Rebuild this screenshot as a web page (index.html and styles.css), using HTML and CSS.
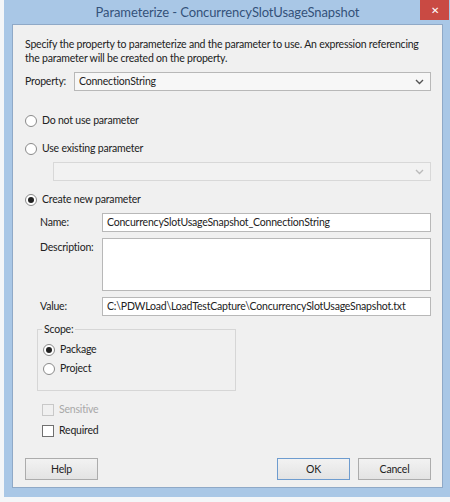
FILE: index.html
```html
<!DOCTYPE html>
<html lang="en">
  <head>
    <meta charset="UTF-8" />
    <title>Parameterize - ConcurrencySlotUsageSnapshot</title>
    <link rel="stylesheet" href="styles.css">
  </head>
  <body>
    <div class="window">
      <div class="titlebar">
        <span class="title">Parameterize - ConcurrencySlotUsageSnapshot</span>
        <button class="close">&#x2715;</button>
      </div>
      <div class="client">
        <p class="intro">
          Specify the property to parameterize and the parameter to use. An expression referencing<br>
          the parameter will be created on the property.
        </p>

        <div class="row property-row">
          <label class="prop-label">Property:</label>
          <div class="combo">
            <span>ConnectionString</span>
            <svg class="chev" width="9" height="6" viewBox="0 0 9 6"><path d="M1 1 L4.5 4.5 L8 1" fill="none" stroke="#555" stroke-width="1.4"/></svg>
          </div>
        </div>

        <div class="radio-line first">
          <span class="radio"></span>
          <span>Do not use parameter</span>
        </div>

        <div class="radio-line existing-line">
          <span class="radio"></span>
          <span>Use existing parameter</span>
        </div>
        <div class="combo disabled existing">
          <span></span>
          <svg class="chev" width="9" height="6" viewBox="0 0 9 6"><path d="M1 1 L4.5 4.5 L8 1" fill="none" stroke="#bbb" stroke-width="1.4"/></svg>
        </div>

        <div class="radio-line create">
          <span class="radio checked"></span>
          <span>Create new parameter</span>
        </div>

        <div class="fields">
          <div class="field">
            <label>Name:</label>
            <div class="textbox">ConcurrencySlotUsageSnapshot_ConnectionString</div>
          </div>
          <div class="field">
            <label>Description:</label>
            <div class="textbox multi"></div>
          </div>
          <div class="field">
            <label>Value:</label>
            <div class="textbox">C:\PDWLoad\LoadTestCapture\ConcurrencySlotUsageSnapshot.txt</div>
          </div>

          <fieldset class="scope">
            <legend>Scope:</legend>
            <div class="radio-line package">
              <span class="radio checked"></span>
              <span>Package</span>
            </div>
            <div class="radio-line project">
              <span class="radio"></span>
              <span>Project</span>
            </div>
          </fieldset>

          <div class="check-line disabled-text">
            <span class="checkbox disabled"></span>
            <span>Sensitive</span>
          </div>
          <div class="check-line">
            <span class="checkbox"></span>
            <span>Required</span>
          </div>
        </div>

        <div class="buttons">
          <button class="btn">Help</button>
          <div class="right-buttons">
            <button class="btn btn-default">OK</button>
            <button class="btn">Cancel</button>
          </div>
        </div>
      </div>
    </div>
  </body>
</html>
```

FILE: styles.css
```css
body {
  margin: 0;
  background-color: #f4f6f8;
  font-family: Lato, "Open Sans", sans-serif;
  font-size: 10.5px;
  letter-spacing: -0.2px;
  line-height: 15px;
  color: #222;
  width: 450px;
  height: 502px;
  overflow: hidden;
}

.window {
  margin-left: 4px;
  width: 446px;
  height: 497px;
  background-color: #a9c7e6; /* Win8 frame blue */
  padding: 0 7px 9px 8px;
  box-sizing: border-box;
  display: flex;
  flex-direction: column;
}

.titlebar {
  height: 24px;
  position: relative;
  display: flex;
  align-items: center;
  justify-content: center;
}

.title {
  font-size: 13px;
  letter-spacing: -0.1px;
  color: #34527a;
  margin-top: 1px;
}

.close {
  position: absolute;
  right: -6px;
  top: 0;
  width: 29px;
  height: 20px;
  border: none;
  background-color: #c94a43;
  color: #fff;
  font-size: 10px;
  padding: 0;
}

.client {
  flex: 1;
  background-color: #f0f0f0;
  border: 1px solid #8fa9c7;
  padding: 8px 11px 0 12px;
  display: flex;
  flex-direction: column;
}

.intro {
  margin: 4px 0 0 0;
  line-height: 14px;
  white-space: nowrap;
}

.row {
  display: flex;
  align-items: center;
}

.property-row {
  margin-top: 7px;
}

.prop-label {
  width: 49px;
}

.combo {
  flex: 1;
  height: 19px;
  background-color: #f7f7f7;
  border: 1px solid #b8b8b8;
  display: flex;
  align-items: center;
  justify-content: space-between;
  padding: 0 6px 0 4px;
  box-sizing: border-box;
}

.combo.disabled {
  background-color: #f2f2f2;
  border-color: #d8d8d8;
}

.existing {
  flex: none;
  margin: 6px 0 0 28px;
}

.radio-line {
  display: flex;
  align-items: center;
  gap: 5px;
  height: 15px;
}

.radio-line.first {
  margin-top: 22px;
}

.radio-line.existing-line {
  margin-top: 13px;
}

.radio-line.create {
  margin-top: 11px;
}

.radio {
  width: 10px;
  height: 10px;
  border: 1px solid #8a8a8a;
  border-radius: 50%;
  background-color: #fff;
  position: relative;
}

.radio.checked::after {
  content: "";
  position: absolute;
  left: 2px;
  top: 2px;
  width: 6px;
  height: 6px;
  border-radius: 50%;
  background-color: #222;
}

.fields {
  padding-left: 15px;
  margin-top: 6px;
}

.field {
  display: flex;
  align-items: flex-start;
  margin-bottom: 6px;
}

.field label {
  width: 62px;
  padding-top: 2px;
}

.textbox {
  flex: 1;
  height: 19px;
  background-color: #fff;
  border: 1px solid #b8b8b8;
  padding: 1px 4px;
  box-sizing: border-box;
  white-space: nowrap;
  overflow: hidden;
}

.textbox.multi {
  height: 53px;
}

.scope {
  width: 192px;
  margin: 0 0 0 -3px;
  padding: 0 0 14px 5px;
  border: 1px solid #d6d6d6;
}

.scope legend {
  padding: 0 2px;
  margin-left: -1px;
}

.radio-line.package {
  margin-top: 5px;
}

.radio-line.project {
  margin-top: 4px;
}

.check-line {
  display: flex;
  align-items: center;
  gap: 5px;
  height: 15px;
  margin-top: 6px;
  padding-left: 2px;
}

.check-line.disabled-text {
  color: #a8a8a8;
  margin-top: 11px;
}

.checkbox {
  width: 10px;
  height: 10px;
  border: 1px solid #707070;
  background-color: #fff;
}

.checkbox.disabled {
  border-color: #c8c8c8;
  background-color: #f0f0f0;
}

.buttons {
  display: flex;
  justify-content: space-between;
  margin-top: 20px;
}

.right-buttons {
  display: flex;
  gap: 8px;
}

.btn {
  width: 73px;
  height: 22px;
  font-family: inherit;
  font-size: 10.5px;
  letter-spacing: -0.2px;
  color: #222;
  background: linear-gradient(#f2f2f2, #e3e3e3);
  border: 1px solid #acacac;
  padding: 0;
}

.btn-default {
  border-color: #6e9ccf;
}
```
